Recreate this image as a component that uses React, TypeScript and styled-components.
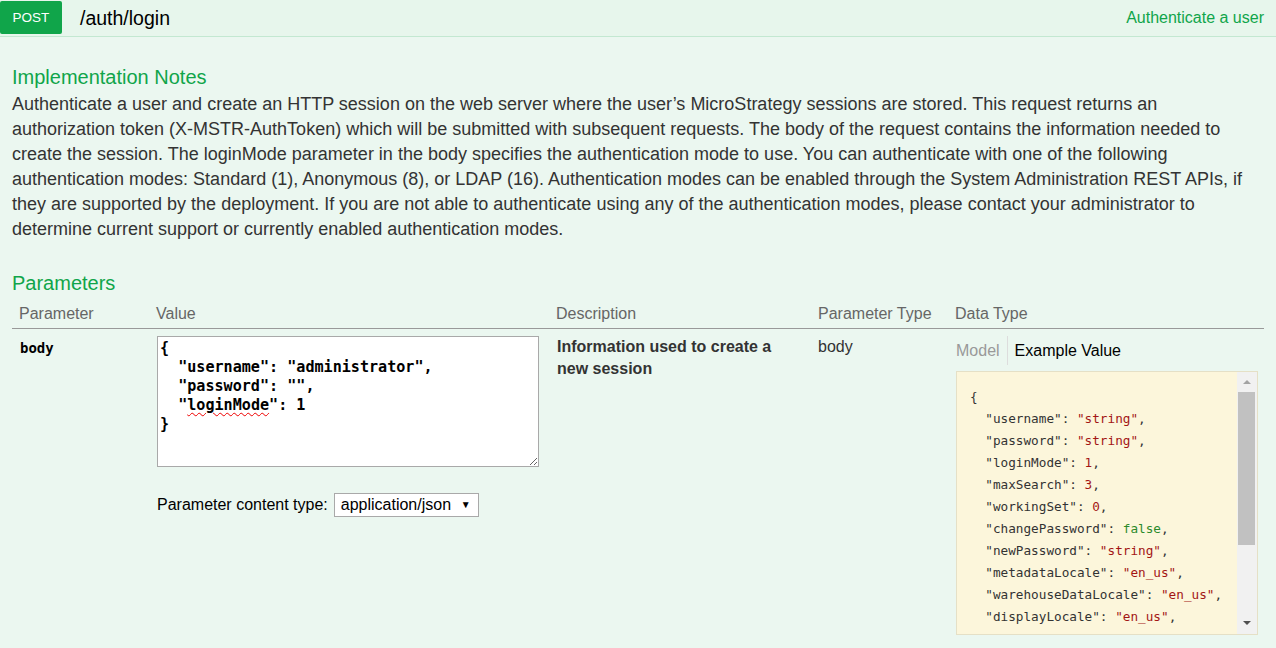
import React from "react";
import styled, { createGlobalStyle } from "styled-components";

const Global = createGlobalStyle`
  html, body { margin: 0; padding: 0; }
  body {
    background: #ebf7f0;
    font-family: "Liberation Sans", Arial, sans-serif;
    color: #333;
    overflow: hidden;
  }
`;

const Page = styled.div`
  width: 1276px;
  height: 648px;
  background: #ebf7f0;
  overflow: hidden;
`;

const Heading = styled.div`
  display: flex;
  align-items: center;
  height: 36px;
  background: #e7f6ec;
  border-bottom: 1px solid #c3e8d1;
  padding-right: 12px;
`;

const Method = styled.span`
  display: flex;
  align-items: center;
  justify-content: center;
  width: 62px;
  height: 33px;
  margin-top: -1px;
  background: #10a54a;
  color: #fff;
  font-size: 13.5px;
  border-radius: 2px;
`;

const Path = styled.span`
  margin-left: 18px;
  font-size: 19.5px;
  color: #000;
  flex: 1;
`;

const Summary = styled.span`
  font-size: 16px;
  color: #10a54a;
`;

const Content = styled.div`
  padding: 28px 12px 0 12px;
`;

const SectionTitle = styled.h4<{ $gap?: number }>`
  margin: ${(p) => p.$gap ?? 0}px 0 0 0;
  font-weight: normal;
  font-size: 20px;
  line-height: 24px;
  color: #10a54a;
`;

const Notes = styled.p`
  margin: 3px 0 0 0;
  width: 1244px;
  font-size: 18px;
  line-height: 25px;
  color: #333;
`;

const Table = styled.div`
  display: grid;
  grid-template-columns: 137px 400px 262px 137px 316px;
  width: 1252px;
`;

const Th = styled.div`
  padding: 9px 5px 4px 7px;
  font-size: 16px;
  line-height: 20px;
  color: #666;
  border-bottom: 1px solid #999;
`;

const Td = styled.div`
  padding: 7px 5px 6px 7px;
  font-size: 16px;
  line-height: 22px;
  color: #333;
`;

const ParamName = styled.div`
  font-family: "DejaVu Sans Mono", monospace;
  font-weight: bold;
  font-size: 14px;
  line-height: 24px;
  color: #000;
  padding-left: 1px;
`;

const BodyEditor = styled.div`
  box-sizing: border-box;
  width: 382px;
  height: 131px;
  margin-left: 1px;
  background: #fff;
  border: 1px solid #a9a9a9;
  padding: 2px 2px;
  font-family: "DejaVu Sans Mono", monospace;
  font-weight: bold;
  font-size: 15.1px;
  line-height: 19px;
  color: #000;
  white-space: pre;
  resize: both;
  overflow: auto;
`;

const Misspelled = styled.span`
  text-decoration: underline wavy #e00;
  text-decoration-thickness: 1px;
  text-underline-offset: 2px;
`;

const ContentTypeRow = styled.div`
  display: flex;
  align-items: center;
  gap: 6px;
  margin-top: 26px;
  margin-left: 1px;
  font-size: 16px;
  color: #000;
`;

const SelectBox = styled.span`
  box-sizing: border-box;
  display: inline-flex;
  align-items: center;
  justify-content: space-between;
  width: 145px;
  height: 24px;
  padding: 0 7px 0 6px;
  background: #fff;
  border: 1px solid #a9a9a9;
  font-size: 16px;
  color: #000;
`;

const Caret = styled.span`
  font-size: 10px;
`;

const Desc = styled.div`
  font-weight: bold;
  padding-left: 1px;
`;

const Tabs = styled.div`
  display: flex;
  align-items: center;
  height: 29px;
  margin-left: 1px;
`;

const Tab = styled.span<{ $active?: boolean }>`
  font-size: 16px;
  line-height: 29px;
  color: ${(p) => (p.$active ? "#000" : "#999")};
  padding: ${(p) => (p.$active ? "0 0 0 7px" : "0 7px 0 0")};
  border-left: ${(p) => (p.$active ? "1px solid #ddd" : "none")};
`;

const Example = styled.div`
  box-sizing: border-box;
  display: flex;
  width: 302px;
  height: 264px;
  margin: 6px 0 0 1px;
  background: #fcf6db;
  border: 1px solid #e5e0c6;
`;

const Code = styled.pre`
  flex: 1;
  margin: 0;
  padding: 14px 0 0 13px;
  overflow: hidden;
  font-family: "DejaVu Sans Mono", monospace;
  font-size: 12.7px;
  line-height: 22px;
  color: #333;
`;

const Str = styled.span`
  color: #a31515;
`;

const Num = styled.span`
  color: #a31515;
`;

const Lit = styled.span`
  color: #2b8a2b;
`;

const Track = styled.div`
  display: flex;
  flex-direction: column;
  width: 20px;
  background: #f1f1f1;
`;

const ArrowBtn = styled.div<{ $down?: boolean; $h: number }>`
  display: flex;
  align-items: center;
  justify-content: center;
  height: ${(p) => p.$h}px;
  &::before {
    content: "";
    width: 0;
    height: 0;
    border-left: 4px solid transparent;
    border-right: 4px solid transparent;
    ${(p) =>
      p.$down
        ? "border-top: 4px solid #505050;"
        : "border-bottom: 4px solid #a3a3a3;"}
  }
`;

const Thumb = styled.div`
  height: 153px;
  width: 17px;
  margin-left: 1px;
  background: #c1c1c1;
`;

const Spacer = styled.div`
  flex: 1;
`;

const rows: Array<[string, React.ReactNode]> = [
  ["username", <Str>"string"</Str>],
  ["password", <Str>"string"</Str>],
  ["loginMode", <Num>1</Num>],
  ["maxSearch", <Num>3</Num>],
  ["workingSet", <Num>0</Num>],
  ["changePassword", <Lit>false</Lit>],
  ["newPassword", <Str>"string"</Str>],
  ["metadataLocale", <Str>"en_us"</Str>],
  ["warehouseDataLocale", <Str>"en_us"</Str>],
  ["displayLocale", <Str>"en_us"</Str>],
  ["messagesLocale", <Str>"en_us"</Str>],
  ["numberLocale", <Str>"en_us"</Str>],
];

export default function App() {
  return (
    <Page>
      <Global />
      <Heading>
        <Method>POST</Method>
        <Path>/auth/login</Path>
        <Summary>Authenticate a user</Summary>
      </Heading>
      <Content>
        <SectionTitle>Implementation Notes</SectionTitle>
        <Notes>
          Authenticate a user and create an HTTP session on the web server where the user’s
          MicroStrategy sessions are stored. This request returns an authorization token
          (X-MSTR-AuthToken) which will be submitted with subsequent requests. The body of the
          request contains the information needed to create the session. The loginMode parameter
          in the body specifies the authentication mode to use. You can authenticate with one of
          the following authentication modes: Standard (1), Anonymous (8), or LDAP (16).
          Authentication modes can be enabled through the System Administration REST APIs, if
          they are supported by the deployment. If you are not able to authenticate using any of
          the authentication modes, please contact your administrator to determine current
          support or currently enabled authentication modes.
        </Notes>
        <SectionTitle $gap={29}>Parameters</SectionTitle>
        <Table>
          <Th>Parameter</Th>
          <Th>Value</Th>
          <Th>Description</Th>
          <Th>Parameter Type</Th>
          <Th>Data Type</Th>
          <Td>
            <ParamName>body</ParamName>
          </Td>
          <Td>
            <BodyEditor>
              {"{\n  \"username\": \"administrator\",\n  \"password\": \"\",\n  \""}
              <Misspelled>loginMode</Misspelled>
              {"\": 1\n}"}
            </BodyEditor>
            <ContentTypeRow>
              Parameter content type:
              <SelectBox>
                application/json <Caret>▼</Caret>
              </SelectBox>
            </ContentTypeRow>
          </Td>
          <Td>
            <Desc>Information used to create a new session</Desc>
          </Td>
          <Td>body</Td>
          <Td>
            <Tabs>
              <Tab>Model</Tab>
              <Tab $active>Example Value</Tab>
            </Tabs>
            <Example>
              <Code>
                {"{\n"}
                {rows.map(([k, v], i) => (
                  <React.Fragment key={k}>
                    {`  "${k}": `}
                    {v}
                    {i < rows.length - 1 ? ",\n" : "\n"}
                  </React.Fragment>
                ))}
                {"}"}
              </Code>
              <Track>
                <ArrowBtn $h={20} />
                <Thumb />
                <Spacer />
                <ArrowBtn $down $h={22} />
              </Track>
            </Example>
          </Td>
        </Table>
      </Content>
    </Page>
  );
}
